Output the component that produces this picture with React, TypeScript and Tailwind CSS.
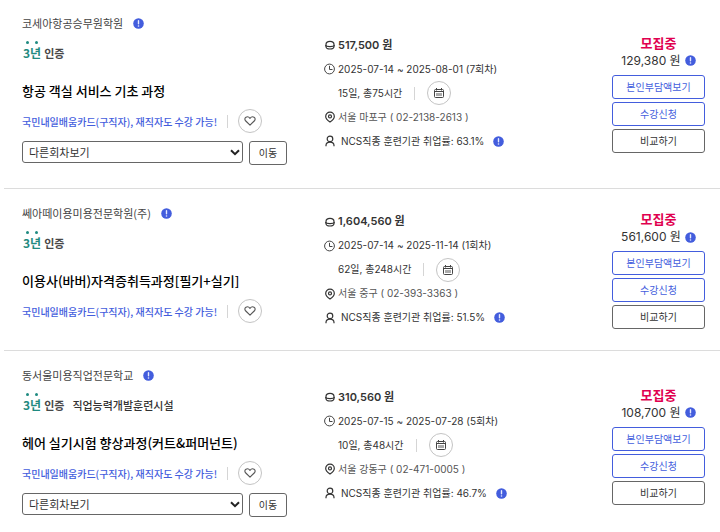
import React, { useState } from "react";

type Course = {
  id: number;
  academy: string;
  facility?: string;
  title: string;
  price: string;
  period: string;
  hours: string;
  region: string;
  phone: string;
  rate: string;
  selfPay: string;
  hasRounds: boolean;
};

const courses: Course[] = [
  {
    id: 1,
    academy: "코세아항공승무원학원",
    title: "항공 객실 서비스 기초 과정",
    price: "517,500",
    period: "2025-07-14 ~ 2025-08-01 (7회차)",
    hours: "15일, 총75시간",
    region: "서울 마포구",
    phone: "02-2138-2613",
    rate: "63.1%",
    selfPay: "129,380",
    hasRounds: true,
  },
  {
    id: 2,
    academy: "쎄아떼이용미용전문학원(주)",
    title: "이용사(바버)자격증취득과정[필기+실기]",
    price: "1,604,560",
    period: "2025-07-14 ~ 2025-11-14 (1회차)",
    hours: "62일, 총248시간",
    region: "서울 중구",
    phone: "02-393-3363",
    rate: "51.5%",
    selfPay: "561,600",
    hasRounds: false,
  },
  {
    id: 3,
    academy: "동서울미용직업전문학교",
    facility: "직업능력개발훈련시설",
    title: "헤어 실기시험 향상과정(커트&퍼머넌트)",
    price: "310,560",
    period: "2025-07-15 ~ 2025-07-28 (5회차)",
    hours: "10일, 총48시간",
    region: "서울 강동구",
    phone: "02-471-0005",
    rate: "46.7%",
    selfPay: "108,700",
    hasRounds: true,
  },
];

const InfoButton = ({ label }: { label: string }) => (
  <button type="button" aria-label={label} className="shrink-0">
    <svg width="11" height="11" viewBox="0 0 11 11" className="block">
      <circle cx="5.5" cy="5.5" r="5.3" fill="#435ddd" />
      <path d="M5.5 2.8v3" stroke="#e6eaff" strokeWidth="1.4" strokeLinecap="round" />
      <circle cx="5.5" cy="8" r="0.8" fill="#e6eaff" />
    </svg>
  </button>
);

const CoinIcon = () => (
  <svg width="11" height="12" viewBox="0 0 11 12" fill="none" stroke="#333" strokeWidth="1.2">
    <path d="M2 5.500C2 3.300 3 2.400 6 2.400s4 .9 4 3.100v2C10 9.300 9 10 6 10s-4-.7-4-2.500z" />
    <path d="M1.400 6.300c.5 1 1.800 1.300 4.600 1.300s4.100-.3 4.600-1.300" />
  </svg>
);

const ClockIcon = () => (
  <svg width="11" height="12" viewBox="0 0 11 12" fill="none" stroke="#444" strokeWidth="1">
    <circle cx="5.5" cy="6" r="4.9" />
    <path d="M5.5 2.8v3.7h3" />
  </svg>
);

const PinIcon = () => (
  <svg width="11" height="12" viewBox="0 0 11 12" fill="none" stroke="#333" strokeWidth="1.2">
    <path d="M6 11C3.200 9.200 1.700 7.500 1.700 5.400a4.300 4.200 0 0 1 8.600 0C10.300 7.500 8.800 9.200 6 11z" />
    <circle cx="6" cy="5.400" r="1.500" />
  </svg>
);

const PersonIcon = () => (
  <svg width="11" height="12" viewBox="0 0 11 12" fill="none" stroke="#333" strokeWidth="1.2">
    <circle cx="6" cy="3.900" r="2.800" />
    <path d="M2 11.200v-.7c0-2 1.500-3.300 4-3.300s4 1.300 4 3.300v.7" />
  </svg>
);

const CalendarIcon = () => (
  <svg width="12" height="12" viewBox="0 0 12 12" fill="none" stroke="#444" strokeWidth="1">
    <rect x="1.500" y="2.500" width="9" height="8" rx="1" />
    <path d="M1.500 4.500h9M3.500 1v2.500M8.500 1v2.500" />
    <path d="M3 7.500h6" stroke="#aaa" strokeWidth="3" />
  </svg>
);

const HeartIcon = () => (
  <svg width="12" height="12" viewBox="0 0 12 12" fill="none" stroke="#555" strokeWidth="1.100">
    <path
      d="M6 10.100 1.300 5.500C.6 4.200.9 2.900 2 2.200c1.300-.7 2.900-.3 4 1.200 1.100-1.500 2.700-1.900 4-1.200 1.100.7 1.400 2 .7 3.300z"
      strokeLinejoin="round"
    />
  </svg>
);

const Separator = () => <span className="h-[13px] w-px bg-[#d5d5d5]" />;

const roundButton =
  "flex size-6 shrink-0 items-center justify-center rounded-full border border-[#c4c4c4]";

const CertBadge = () => (
  <span className="relative flex items-center gap-[3px] pl-px font-bold">
    <span className="absolute -top-px left-1 size-[3px] rounded-full bg-[#1f8a80]" />
    <span className="absolute -top-px left-[13px] size-[3px] rounded-full bg-[#1f8a80]" />
    <span className="text-[12px] leading-[22px] text-[#1f8a80]">3년</span>
    <span className="text-[11px] leading-[22px] text-[#484848]">인증</span>
  </span>
);

const RoundForm = () => {
  const [round, setRound] = useState("");
  return (
    <form
      onSubmit={(e) => e.preventDefault()}
      className="mt-2 flex items-start gap-[6px]"
    >
      <div className="relative w-[221px]">
        <select
          aria-label="다른회차보기"
          value={round}
          onChange={(e) => setRound(e.target.value)}
          className="block h-[22px] w-full appearance-none rounded-[3px] border border-[#666] bg-white pl-[6px] text-[11px] leading-5 text-[#333]"
        >
          <option value="">다른회차보기</option>
        </select>
        <svg
          width="10"
          height="7"
          viewBox="0 0 10 7"
          className="pointer-events-none absolute top-2 right-[3px]"
        >
          <path d="M1 1.200l4 4 4-4" fill="none" stroke="#222" strokeWidth="2" />
        </svg>
      </div>
      <button
        type="submit"
        className="h-6 w-[38px] rounded-[3px] border border-[#666] text-[10px] leading-5 text-[#333]"
      >
        이동
      </button>
    </form>
  );
};

const CourseRow = ({ course }: { course: Course }) => {
  const [liked, setLiked] = useState<boolean>(false);
  return (
    <li className="ml-1 grid min-h-[162px] grid-cols-[302fr_288fr_93px] items-center border-b border-[#dcdcdc] pt-[14px] pr-[15px] pb-[14px] pl-[18px] first:pt-[13px] first:pb-[15px] last:border-b-0 last:pb-0">
      <div className="self-start pb-2">
        <div className="flex h-5 items-center gap-[10px] text-[11px] text-[#444]">
          <span>{course.academy}</span>
          <InfoButton label="훈련기관 안내" />
        </div>
        <div className="flex h-10 items-center gap-2">
          <CertBadge />
          {course.facility && (
            <span className="text-[11px] font-medium text-[#333]">{course.facility}</span>
          )}
        </div>
        <h2 className="h-9 text-[13px] leading-9 font-medium text-black">
          <a href="#">{course.title}</a>
        </h2>
        <div className="flex h-6 items-center gap-[10px]">
          <p className="text-[10px] font-medium text-[#435ddd]">
            국민내일배움카드(구직자), 재직자도 수강 가능!
          </p>
          <Separator />
          <button
            type="button"
            aria-label="관심 과정"
            aria-pressed={liked}
            onClick={() => setLiked(!liked)}
            className={roundButton}
          >
            <HeartIcon />
          </button>
        </div>
        {course.hasRounds && <RoundForm />}
      </div>

      <ul className="font-['Inter','Noto_Sans_CJK_KR',sans-serif] text-[10px] text-[#333]">
        <li className="flex h-6 items-center gap-[3px] text-[11px] font-semibold">
          <CoinIcon />
          {course.price} 원
        </li>
        <li className="flex h-6 items-center gap-[3px]">
          <ClockIcon />
          {course.period}
        </li>
        <li className="flex h-6 items-center gap-3 pl-[14px]">
          {course.hours}
          <Separator />
          <button type="button" aria-label="훈련 일정" className={roundButton}>
            <CalendarIcon />
          </button>
        </li>
        <li className="flex h-6 items-center gap-[3px] text-[#555]">
          <PinIcon />
          {course.region} ( {course.phone} )
        </li>
        <li className="flex h-6 items-center gap-[6px]">
          <PersonIcon />
          <span className="mr-[3px]">NCS직종 훈련기관 취업률: {course.rate}</span>
          <InfoButton label="취업률 안내" />
        </li>
      </ul>

      <div className="flex flex-col gap-[3px] text-[10px]">
        <div className="mb-[2px] text-center">
          <p className="text-[13px] leading-[18px] font-bold text-[#e0004f]">모집중</p>
          <p className="flex items-center justify-center gap-1 font-['Inter','Noto_Sans_CJK_KR',sans-serif] text-[12px] leading-[18px] text-[#333]">
            {course.selfPay} 원
            <InfoButton label="본인부담액 안내" />
          </p>
        </div>
        <button type="button" className="h-6 rounded-[3px] border border-[#435ddd] leading-5 text-[#435ddd]">
          본인부담액보기
        </button>
        <button type="button" className="h-6 rounded-[3px] border border-[#435ddd] leading-5 text-[#435ddd]">
          수강신청
        </button>
        <button type="button" className="h-6 rounded-[3px] border border-[#666] leading-5 text-[#333]">
          비교하기
        </button>
      </div>
    </li>
  );
};

const App = () => {
  return (
    <main className="bg-white font-['Noto_Sans_CJK_KR',sans-serif]">
      <ul>
        {courses.map((course) => (
          <CourseRow key={course.id} course={course} />
        ))}
      </ul>
    </main>
  );
};

export default App;
